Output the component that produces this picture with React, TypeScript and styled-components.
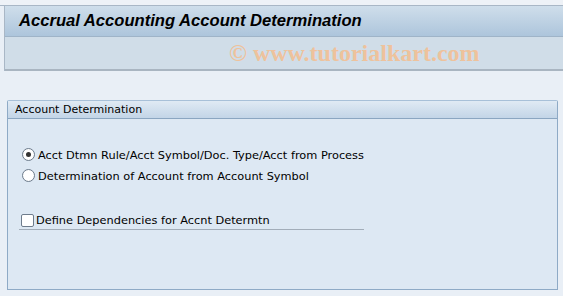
import React from "react";
import styled, { createGlobalStyle } from "styled-components";

const Global = createGlobalStyle`
  html, body { margin: 0; padding: 0; background: #e9eff6; }
  body { width: 563px; height: 296px; overflow: hidden; font-family: "DejaVu Sans", sans-serif; }
`;

const Page = styled.div`
  width: 563px;
  height: 296px;
  display: flex;
  flex-direction: column;
  background: #e9eff6;
`;

const TopStrip = styled.div`
  height: 5px;
  background: #eef2f7;
  border-bottom: 1px solid #a9b7c6;
`;

const Header = styled.div`
  margin-left: 4px;
  border-left: 1px solid #a9b7c6;
  display: flex;
  flex-direction: column;
`;

const TitleBar = styled.div`
  height: 30px;
  display: flex;
  align-items: center;
  padding-left: 14px;
  background: linear-gradient(#cfdeeb, #adc5dc);
  border-bottom: 1px solid #9fb4c8;
`;

const Title = styled.h1`
  margin: 0;
  font-family: "Liberation Sans", Arial, sans-serif;
  font-weight: bold;
  font-style: italic;
  font-size: 16.6px;
  color: #000;
`;

const Toolbar = styled.div`
  height: 32px;
  display: flex;
  align-items: center;
  padding-left: 224px;
  background: #d0dde8;
  border-bottom: 2px solid #a9b5c1;
`;

const Watermark = styled.span`
  font-family: "Liberation Serif", "Times New Roman", serif;
  font-weight: bold;
  font-size: 24px;
  color: #eec29c;
`;

const Body = styled.div`
  flex: 1;
  padding: 29px 5px 6px 7px;
  display: flex;
`;

const Group = styled.section`
  flex: 1;
  display: flex;
  flex-direction: column;
  border: 1px solid #8eaac6;
  border-top-color: #a8c0d8;
  border-radius: 2px 2px 0 0;
  background: #dde8f3;
`;

const GroupHead = styled.div`
  height: 17px;
  display: flex;
  align-items: center;
  padding-left: 7px;
  background: linear-gradient(#e0eaf4, #c3d5e7);
  border-bottom: 1px solid #8ba6c1;
  font-family: "DejaVu Sans", sans-serif;
  font-size: 11px;
  color: #000;
`;

const GroupBody = styled.div`
  padding: 25px 0 0 11px;
  display: flex;
  flex-direction: column;
`;

const Option = styled.label`
  display: flex;
  align-items: center;
  height: 21px;
  padding-left: 3px;
  font-family: "DejaVu Sans", sans-serif;
  font-size: 11.35px;
  color: #000;
  gap: 3px;
`;

const Radio = styled.span<{ $on?: boolean }>`
  width: 11px;
  height: 11px;
  border-radius: 50%;
  border: 1px solid #6e7c8c;
  background: radial-gradient(circle, #fff 60%, #e4e8ee);
  display: flex;
  align-items: center;
  justify-content: center;
  &::after {
    content: "";
    width: 5px;
    height: 5px;
    border-radius: 50%;
    background: ${(p) => (p.$on ? "#333" : "transparent")};
  }
`;

const CheckRow = styled.label`
  margin-top: 25px;
  width: 345px;
  height: 19px;
  display: flex;
  align-items: center;
  gap: 2px;
  border-bottom: 1px solid #a2adb9;
  font-family: "DejaVu Sans", sans-serif;
  font-size: 11.35px;
  color: #000;
  padding-left: 2px;
  box-sizing: border-box;
`;

const Box = styled.span`
  width: 11px;
  height: 11px;
  border: 1px solid #6e7c8c;
  border-radius: 2px;
  background: #fff;
`;

export default function App() {
  return (
    <Page>
      <Global />
      <TopStrip />
      <Header>
        <TitleBar>
          <Title>Accrual Accounting Account Determination</Title>
        </TitleBar>
        <Toolbar>
          <Watermark>© www.tutorialkart.com</Watermark>
        </Toolbar>
      </Header>
      <Body>
        <Group>
          <GroupHead>Account Determination</GroupHead>
          <GroupBody>
            <Option>
              <Radio $on />
              Acct Dtmn Rule/Acct Symbol/Doc. Type/Acct from Process
            </Option>
            <Option>
              <Radio />
              Determination of Account from Account Symbol
            </Option>
            <CheckRow>
              <Box />
              Define Dependencies for Accnt Determtn
            </CheckRow>
          </GroupBody>
        </Group>
      </Body>
    </Page>
  );
}
